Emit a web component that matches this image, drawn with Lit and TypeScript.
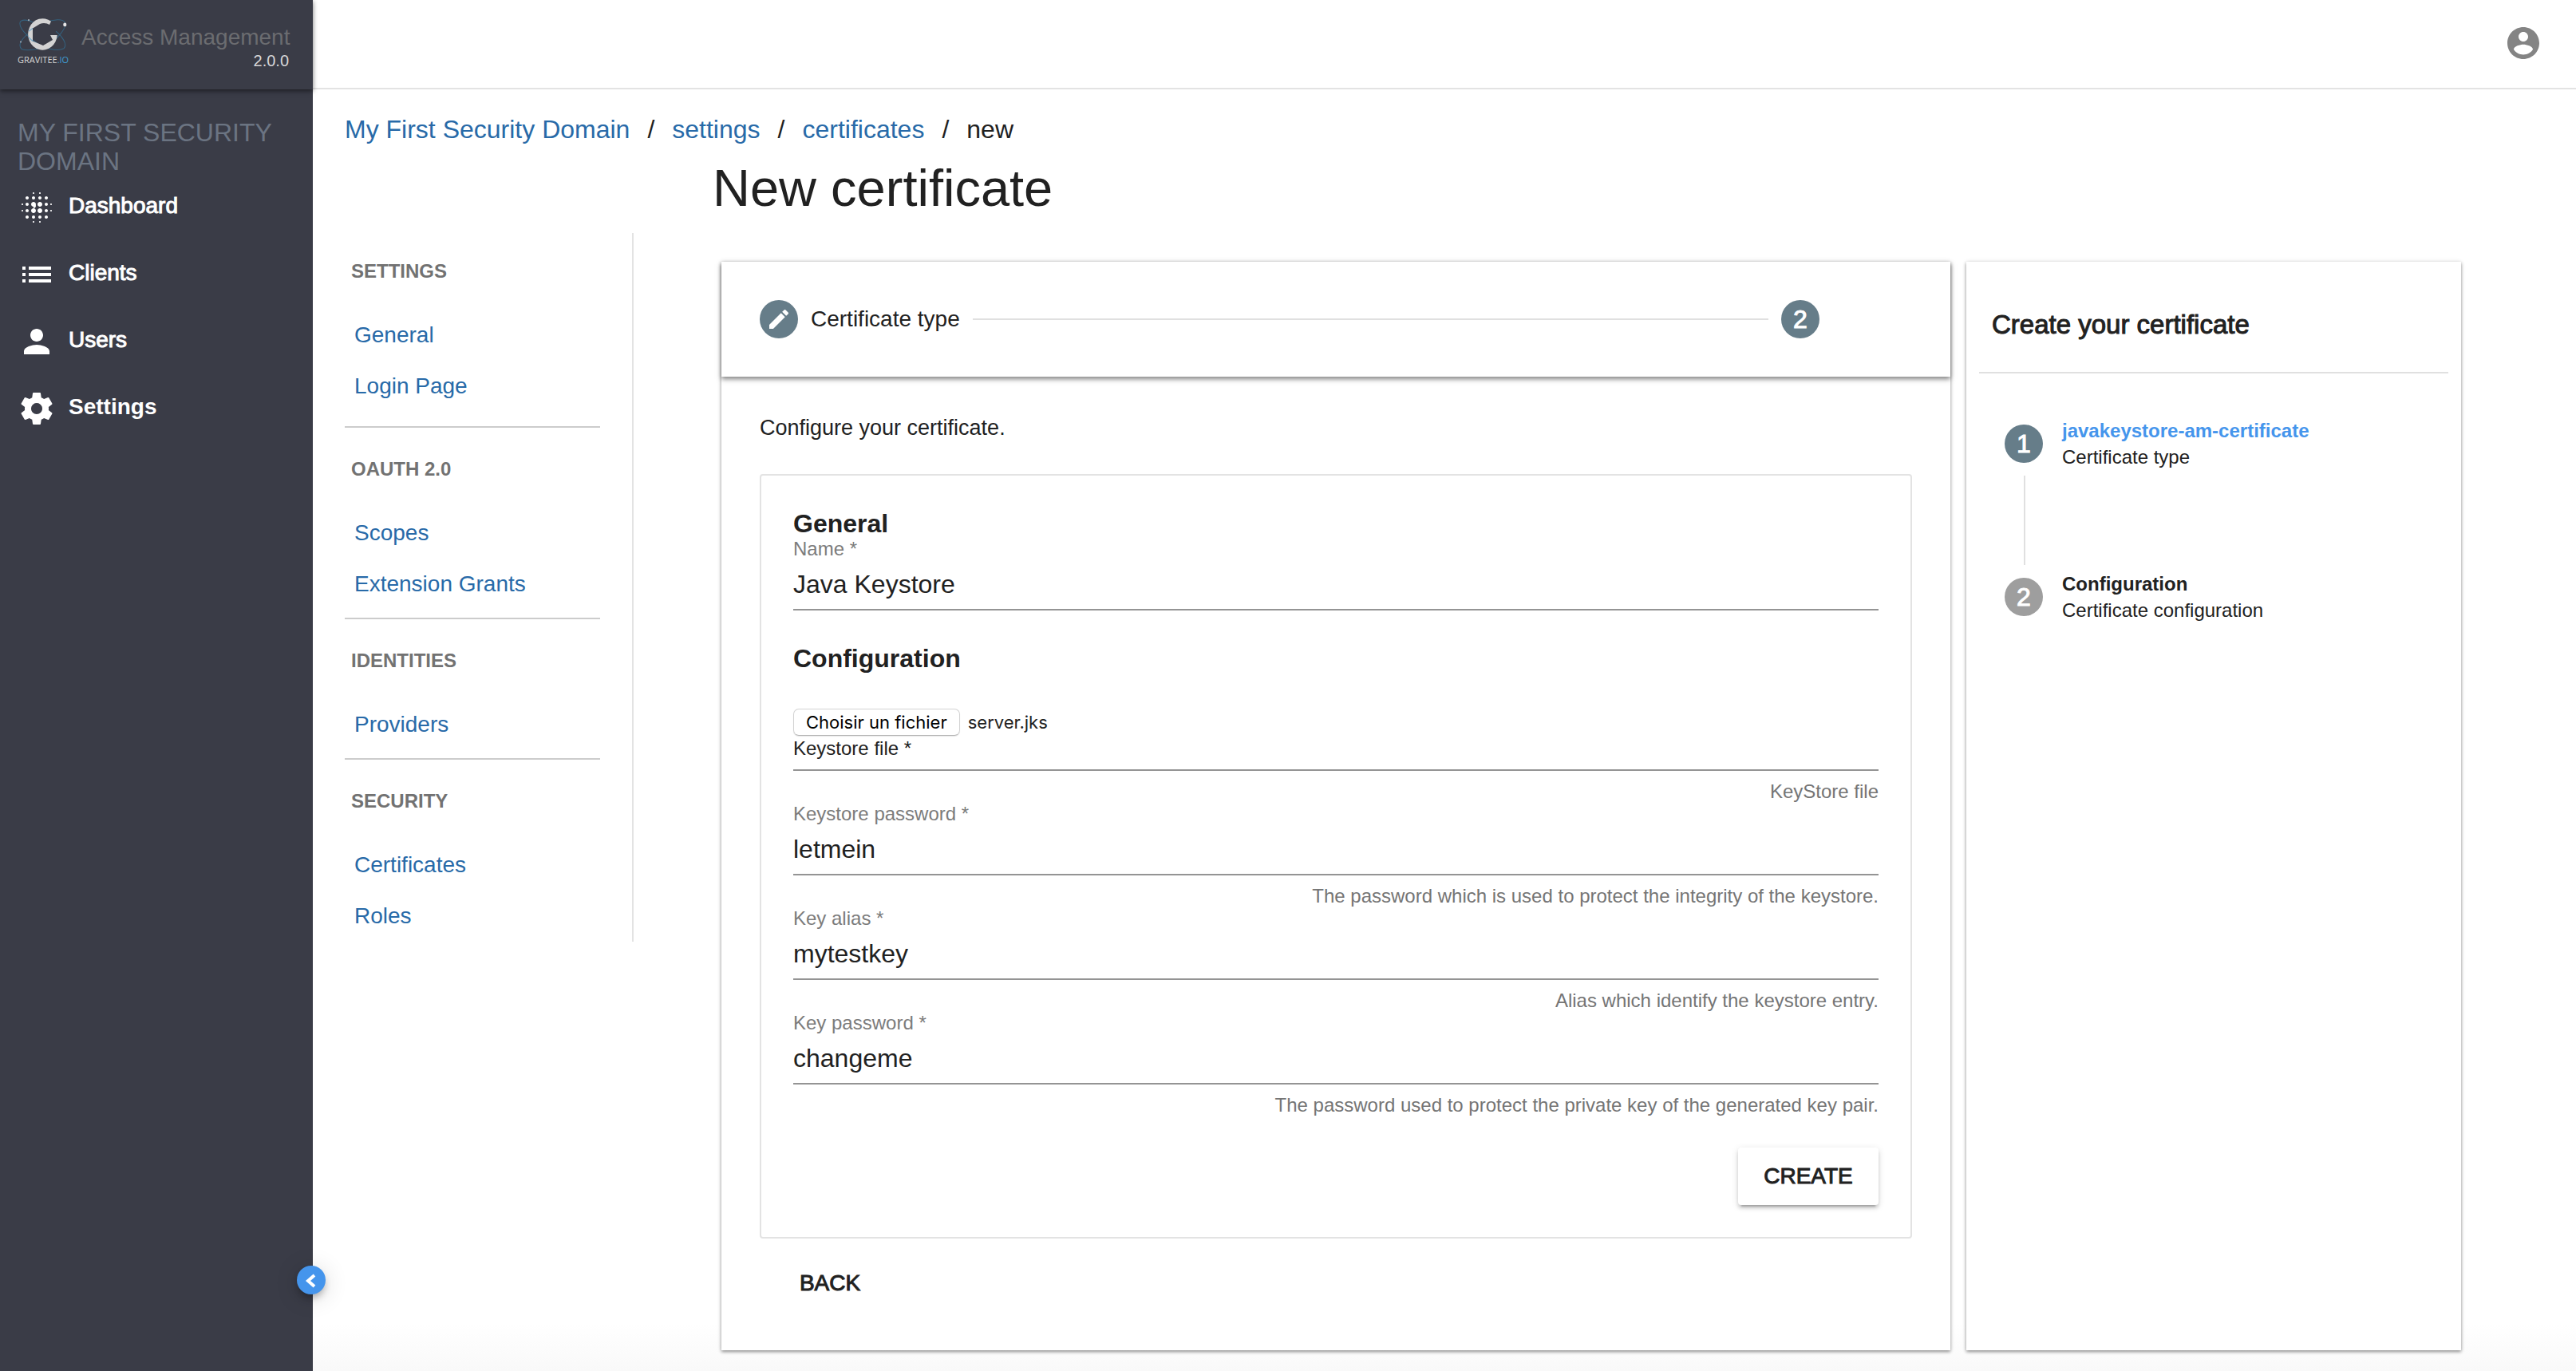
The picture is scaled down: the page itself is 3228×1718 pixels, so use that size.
import { LitElement, html, css, nothing } from "lit";
import { customElement, state } from "lit/decorators.js";
import { classMap } from "lit/directives/class-map.js";

const icons = {
  dashboard: "M6 13c-.55 0-1 .45-1 1s.45 1 1 1 1-.45 1-1-.45-1-1-1zm0 4c-.55 0-1 .45-1 1s.45 1 1 1 1-.45 1-1-.45-1-1-1zm0-8c-.55 0-1 .45-1 1s.45 1 1 1 1-.45 1-1-.45-1-1-1zm-3 .5c-.28 0-.5.22-.5.5s.22.5.5.5.5-.22.5-.5-.22-.5-.5-.5zM6 5c-.55 0-1 .45-1 1s.45 1 1 1 1-.45 1-1-.45-1-1-1zm15 5.5c.28 0 .5-.22.5-.5s-.22-.5-.5-.5-.5.22-.5.5.22.5.5.5zM14 7c.55 0 1-.45 1-1s-.45-1-1-1-1 .45-1 1 .45 1 1 1zm0-3.500c.28 0 .5-.22.5-.5s-.22-.5-.5-.5-.5.22-.5.5.22.5.5.5zm-11 10c-.28 0-.5.22-.5.5s.22.5.5.5.5-.22.5-.5-.22-.5-.5-.5zm7 7c-.28 0-.5.22-.5.5s.22.5.5.5.5-.22.5-.5-.22-.5-.5-.5zm0-17c.28 0 .5-.22.5-.5s-.22-.5-.5-.5-.5.22-.5.5.22.5.5.5zM10 7c.55 0 1-.45 1-1s-.45-1-1-1-1 .45-1 1 .45 1 1 1zm0 5.500c.83 0 1.500-.67 1.500-1.500S10.830 8.500 10 8.500s-1.500.67-1.500 1.500.67 1.500 1.500 1.500zm8 .5c-.55 0-1 .45-1 1s.45 1 1 1 1-.45 1-1-.45-1-1-1zm0 4c-.55 0-1 .45-1 1s.45 1 1 1 1-.45 1-1-.45-1-1-1zm0-8c-.55 0-1 .45-1 1s.45 1 1 1 1-.45 1-1-.45-1-1-1zm0-4c-.55 0-1 .45-1 1s.45 1 1 1 1-.45 1-1-.45-1-1-1zm3 8.500c-.28 0-.5.22-.5.5s.22.5.5.5.5-.22.5-.5-.22-.5-.5-.5zM14 17c-.55 0-1 .45-1 1s.45 1 1 1 1-.45 1-1-.45-1-1-1zm0 3.500c-.28 0-.5.22-.5.5s.22.5.5.5.5-.22.5-.5-.22-.5-.5-.5zm-4-12c-.83 0-1.500.67-1.500 1.500s.67 1.500 1.500 1.500 1.500-.67 1.500-1.500-.67-1.500-1.500-1.500zm0 8.500c-.55 0-1 .45-1 1s.45 1 1 1 1-.45 1-1-.45-1-1-1zm4-4.500c-.83 0-1.500.67-1.500 1.500s.67 1.500 1.500 1.500 1.500-.67 1.500-1.500-.67-1.500-1.500-1.500zm0-4c-.83 0-1.500.67-1.500 1.500s.67 1.500 1.500 1.500 1.500-.67 1.500-1.500-.67-1.500-1.500-1.500zm-4 4c-.83 0-1.500.67-1.500 1.500s.67 1.500 1.500 1.500 1.500-.67 1.500-1.500-.67-1.500-1.500-1.500z",
  list: "M3 13h2v-2H3v2zm0 4h2v-2H3v2zm0-8h2V7H3v2zm4 4h14v-2H7v2zm0 4h14v-2H7v2zM7 7v2h14V7H7z",
  person: "M12 12c2.210 0 4-1.790 4-4s-1.790-4-4-4-4 1.790-4 4 1.790 4 4 4zm0 2c-2.670 0-8 1.340-8 4v2h16v-2c0-2.660-5.330-4-8-4z",
  settings: "M19.430 12.980c.04-.32.07-.64.07-.98s-.03-.66-.07-.98l2.110-1.650c.19-.15.24-.42.12-.64l-2-3.460c-.12-.22-.39-.3-.61-.22l-2.490 1c-.52-.4-1.080-.73-1.690-.98l-.38-2.650C14.460 2.180 14.250 2 14 2h-4c-.25 0-.46.18-.49.42l-.38 2.650c-.61.25-1.170.59-1.690.98l-2.490-1c-.23-.09-.49 0-.61.22l-2 3.460c-.13.22-.07.49.12.64l2.110 1.650c-.04.32-.07.65-.07.98s.03.66.07.98l-2.110 1.650c-.19.15-.24.42-.12.64l2 3.460c.12.22.39.3.61.22l2.490-1c.52.4 1.080.73 1.690.98l.38 2.650c.03.24.24.42.49.42h4c.25 0 .46-.18.49-.42l.38-2.650c.61-.25 1.170-.59 1.690-.98l2.490 1c.23.09.49 0 .61-.22l2-3.460c.12-.22.07-.49-.12-.64l-2.110-1.650zM12 15.500c-1.930 0-3.500-1.570-3.500-3.500s1.570-3.500 3.500-3.500 3.500 1.570 3.500 3.500-1.570 3.500-3.500 3.500z",
  account: "M12 2C6.480 2 2 6.480 2 12s4.480 10 10 10 10-4.480 10-10S17.520 2 12 2zm0 3c1.660 0 3 1.340 3 3s-1.340 3-3 3-3-1.340-3-3 1.340-3 3-3zm0 14.200c-2.500 0-4.710-1.280-6-3.220.03-1.990 4-3.080 6-3.080 1.990 0 5.970 1.090 6 3.080-1.290 1.940-3.500 3.220-6 3.220z",
  edit: "M3 17.250V21h3.750L17.810 9.940l-3.750-3.750L3 17.250zM20.710 7.040c.39-.39.39-1.020 0-1.410l-2.340-2.340c-.39-.39-1.020-.39-1.410 0l-1.830 1.830 3.750 3.750 1.830-1.830z",
};

const icon = (d: string, cls = "icon") =>
  html`<svg class=${cls} viewBox="0 0 24 24" aria-hidden="true"><path d=${d} fill="currentColor"></path></svg>`;

const base = css`
  :host {
    display: block;
    font-family: "Liberation Sans", Arial, Helvetica, sans-serif;
    color: #212121;
  }
  * {
    box-sizing: border-box;
  }
  a {
    text-decoration: none;
    color: #286aa8;
  }
  h1, h2, h3, p, ul, ol {
    margin: 0;
    padding: 0;
    list-style: none;
  }
  button {
    font: inherit;
    color: inherit;
    border: 0;
    background: none;
    cursor: pointer;
  }
`;

@customElement("am-sidebar")
class AmSidebar extends LitElement {
  static styles = [base, css`
    :host {
      position: relative;
      background: #3a3c47;
      color: #fff;
    }
    .brand {
      display: flex;
      height: 112px;
      padding: 23px 24px 0 22px;
      gap: 16px;
      box-shadow: 0 2px 6px rgba(0, 0, 0, 0.55);
    }
    .logo {
      display: flex;
      flex-direction: column;
      width: 64px;
      font: 11px/22px "Open Sans", "Noto Sans", sans-serif;
      color: #d5d5d5;
    }
    .logo .mark {
      width: 64px;
      height: 41px;
    }
    .logo .io {
      color: #3f9bd0;
    }
    .product {
      flex: 1;
      display: flex;
      flex-direction: column;
      padding-top: 4px;
      font-size: 28px;
      line-height: 40px;
      color: #6b6c70;
      white-space: nowrap;
    }
    .version {
      align-self: flex-end;
      padding-right: 6px;
      font-size: 20px;
      line-height: 18px;
      color: #d6d6d8;
    }
    .domain {
      padding: 36px 22px 16px;
      font-size: 32px;
      font-weight: 400;
      line-height: 36px;
      color: #6b7482;
      text-transform: uppercase;
    }
    .menu {
      display: flex;
      flex-direction: column;
      gap: 36px;
      padding: 0 22px;
    }
    .item {
      display: flex;
      align-items: center;
      gap: 16px;
      height: 48px;
      color: #fff;
      font-size: 28px;
      -webkit-text-stroke: 1px currentColor;
    }
    .item.active {
      font-weight: 700;
      -webkit-text-stroke: 0;
    }
    .icon {
      width: 48px;
      height: 48px;
      flex: none;
    }
    .text {
      padding-bottom: 4px;
    }
    .toggle {
      position: absolute;
      right: -16px;
      bottom: 96px;
      width: 36px;
      height: 36px;
      padding: 0;
      border-radius: 50%;
      background: #4595ec;
      box-shadow: 0 6px 10px -2px rgba(0, 0, 0, 0.3), 0 4px 30px rgba(0, 0, 0, 0.16);
    }
    .chevron {
      display: block;
      width: 36px;
      height: 36px;
    }
  `];

  private items = [
    { label: "Dashboard", icon: icons.dashboard },
    { label: "Clients", icon: icons.list },
    { label: "Users", icon: icons.person },
    { label: "Settings", icon: icons.settings, active: true },
  ];

  render() {
    return html`
      <div class="brand">
        <div class="logo">
          <svg class="mark" viewBox="22 22 64 38" preserveAspectRatio="none" aria-hidden="true">
            <g fill="none" stroke="#35627f" stroke-width="1">
              <path d="M57 27C67 23 79 22 81.500 27C84 33 72 45 64 51C53 58 35 60 27.500 58C22 54 26 47 35 40"></path>
              <path d="M42 27C35 23 26 23 25 27C24 33 33 42 42 48C54 57 72 61 80 57C85 52 78 43 70 37"></path>
            </g>
            <path fill="#d3d3d3" d="M64 25.500A18.300 18.300 0 1 0 71.700 41.500L63 41.500L66 47L54 53.500L41 48.500L41 33.500L50 28.500C54 27 59 27.500 62 29.500Z"></path>
            <path d="M36 37L41 33.500M36 44L41 48.500" stroke="#6fa8cc" stroke-width="1"></path>
            <circle cx="81.300" cy="29.300" r="2.100" fill="#e6e6e6"></circle>
            <circle cx="36" cy="24" r="1" fill="#a9b4bd"></circle>
            <circle cx="26" cy="49.300" r="1" fill="#a9b4bd"></circle>
          </svg>
          <span>GRAVITEE<span class="io">.IO</span></span>
        </div>
        <div class="product">
          <span>Access Management</span>
          <span class="version">2.0.0</span>
        </div>
      </div>
      <h2 class="domain">My First Security Domain</h2>
      <nav class="menu" aria-label="Domain">
        ${this.items.map((i) => html`
          <a href="#" class=${classMap({ item: true, active: !!i.active })}>
            ${icon(i.icon)}<span class="text">${i.label}</span>
          </a>`)}
      </nav>
      <button class="toggle" aria-label="Collapse menu">
        <svg class="chevron" viewBox="0 0 36 36" aria-hidden="true">
          <path d="M22 12L14 19L22 26" fill="none" stroke="#fff" stroke-width="4"></path>
        </svg>
      </button>
    `;
  }
}

@customElement("am-settings-nav")
class AmSettingsNav extends LitElement {
  static styles = [base, css`
    :host {
      border-right: 2px solid #e3e3e3;
    }
    .group {
      margin-right: 40px;
      padding: 28px 0 10px;
      border-bottom: 2px solid #ccc;
    }
    .group:first-child {
      padding: 24px 0 18px;
    }
    .group:last-child {
      padding-bottom: 0;
      border-bottom: 0;
    }
    .title {
      padding: 0 8px 24px;
      font-size: 24px;
      line-height: 48px;
      font-weight: 700;
      color: #727272;
      text-transform: uppercase;
    }
    .link {
      display: block;
      padding-left: 12px;
      font-size: 28px;
      line-height: 64px;
    }
  `];

  private groups = [
    { title: "Settings", links: ["General", "Login Page"] },
    { title: "OAuth 2.0", links: ["Scopes", "Extension Grants"] },
    { title: "Identities", links: ["Providers"] },
    { title: "Security", links: ["Certificates", "Roles"] },
  ];

  render() {
    return this.groups.map((g) => html`
      <section class="group">
        <h3 class="title">${g.title}</h3>
        ${g.links.map((l) => html`<a class="link" href="#">${l}</a>`)}
      </section>`);
  }
}

@customElement("am-certificate-form")
class AmCertificateForm extends LitElement {
  static styles = [base, css`
    :host {
      border: 2px solid #e3e3e3;
      border-radius: 4px;
    }
    .form {
      display: flex;
      flex-direction: column;
      padding: 42px 40px 40px;
    }
    .heading {
      font-size: 32px;
      line-height: 36px;
      font-weight: 700;
    }
    .heading.next {
      margin: 42px 0 45px;
    }
    .field {
      display: flex;
      flex-direction: column;
      border-bottom: 2px solid #949494;
    }
    .label {
      font-size: 24px;
      line-height: 28px;
      color: #7c7c7c;
    }
    .label.dark {
      color: #212121;
    }
    .input {
      height: 61px;
      width: 100%;
      padding: 0;
      border: 0;
      outline: 0;
      background: none;
      font: inherit;
      font-size: 32px;
      color: #212121;
    }
    .file {
      display: flex;
      align-items: flex-start;
      gap: 10px;
      height: 36px;
      position: relative;
      font-family: Inter, sans-serif;
      font-size: 22px;
      line-height: 34px;
    }
    .picker {
      height: 34px;
      padding: 0 15px;
      border: 1px solid #d2d2d2;
      border-bottom-color: #b4b4b4;
      border-radius: 7px;
      line-height: 32px;
      color: #000;
      box-shadow: 0 1px 1px rgba(0, 0, 0, 0.1);
    }
    .native {
      position: absolute;
      width: 100%;
      height: 34px;
      opacity: 0;
    }
    .field.upload {
      padding-bottom: 12px;
    }
    .hint {
      padding-top: 12px;
      font-size: 24px;
      line-height: 28px;
      text-align: right;
      color: #757575;
    }
    .create {
      align-self: flex-end;
      min-width: 176px;
      height: 72px;
      margin-top: 39px;
      padding: 0 30px;
      border-radius: 4px;
      background: #fff;
      font-size: 28px;
      -webkit-text-stroke: 1px currentColor;
      box-shadow: 0 6px 2px -4px rgba(0, 0, 0, 0.2), 0 4px 4px rgba(0, 0, 0, 0.14), 0 2px 10px rgba(0, 0, 0, 0.12);
    }
  `];

  @state() private fileName = "server.jks";

  private fields = [
    { id: "store-pass", label: "Keystore password", value: "letmein", hint: "The password which is used to protect the integrity of the keystore." },
    { id: "alias", label: "Key alias", value: "mytestkey", hint: "Alias which identify the keystore entry." },
    { id: "key-pass", label: "Key password", value: "changeme", hint: "The password used to protect the private key of the generated key pair." },
  ];

  private pick(e: Event) {
    const file = (e.target as HTMLInputElement).files?.[0];
    if (file) this.fileName = file.name;
  }

  private field(f: { id: string; label: string; value: string; hint?: string }) {
    return html`
      <div class="field">
        <label class="label" for=${f.id}>${f.label} *</label>
        <input class="input" id=${f.id} type="text" required .value=${f.value} />
      </div>
      ${f.hint ? html`<p class="hint">${f.hint}</p>` : nothing}`;
  }

  render() {
    return html`
      <form class="form" @submit=${(e: Event) => e.preventDefault()}>
        <h3 class="heading">General</h3>
        ${this.field({ id: "name", label: "Name", value: "Java Keystore" })}
        <h3 class="heading next">Configuration</h3>
        <div class="field upload">
          <div class="file">
            <span class="picker">Choisir un fichier</span>
            <span>${this.fileName}</span>
            <input class="native" id="file" type="file" @change=${this.pick} />
          </div>
          <label class="label dark" for="file">Keystore file *</label>
        </div>
        <p class="hint">KeyStore file</p>
        ${this.fields.map((f) => this.field(f))}
        <button class="create" type="submit">CREATE</button>
      </form>`;
  }
}

@customElement("am-summary")
class AmSummary extends LitElement {
  static styles = [base, css`
    .title {
      margin: 0 16px;
      padding: 60px 16px 40px;
      border-bottom: 2px solid #e0e0e0;
      font-size: 33px;
      line-height: 38px;
      font-weight: 400;
      -webkit-text-stroke: 1px currentColor;
    }
    .steps {
      display: flex;
      flex-direction: column;
      padding: 64px 48px;
    }
    .step {
      display: flex;
      align-items: center;
      gap: 24px;
      height: 48px;
      font-size: 24px;
      line-height: 33px;
    }
    .badge {
      width: 48px;
      height: 48px;
      flex: none;
      border-radius: 50%;
      background: #9e9e9e;
      color: #fff;
      font-size: 32px;
      line-height: 49px;
      text-align: center;
      -webkit-text-stroke: 1px currentColor;
    }
    .badge.done {
      background: #667d89;
    }
    .name {
      font-weight: 700;
    }
    .name.done {
      color: #4595ec;
    }
    .connector {
      width: 2px;
      height: 112px;
      margin: 16px 24px;
      background: #e0e0e0;
    }
  `];

  render() {
    return html`
      <h2 class="title">Create your certificate</h2>
      <div class="steps">
        <div class="step">
          <span class="badge done">1</span>
          <div><p class="name done">javakeystore-am-certificate</p><p>Certificate type</p></div>
        </div>
        <div class="connector"></div>
        <div class="step">
          <span class="badge">2</span>
          <div><p class="name">Configuration</p><p>Certificate configuration</p></div>
        </div>
      </div>`;
  }
}

@customElement("app-root")
class AppRoot extends LitElement {
  static styles = [base, css`
    .shell {
      display: grid;
      grid-template-columns: 392px 1fr;
      min-height: 100vh;
      background: linear-gradient(to top, #f9f9f9, #fff 60px);
    }
    .topbar {
      display: flex;
      justify-content: flex-end;
      height: 112px;
      padding: 30px 42px 0;
      border-bottom: 2px solid #e3e3e3;
    }
    .user {
      width: 48px;
      height: 48px;
      padding: 0;
      color: #848484;
    }
    .icon {
      display: block;
      width: 48px;
      height: 48px;
    }
    .page {
      padding: 30px 144px 26px 40px;
    }
    .crumbs {
      display: flex;
      gap: 22px;
      margin-bottom: 18px;
      font-size: 32px;
      line-height: 40px;
    }
    .body {
      display: grid;
      grid-template-columns: 362px 1fr;
      align-items: start;
    }
    .heading {
      grid-column: 2;
      padding: 0 0 20px 99px;
      font-size: 65px;
      line-height: 72px;
      font-weight: 400;
    }
    .columns {
      display: flex;
      gap: 20px;
      padding: 36px 0 0 110px;
    }
    .card {
      flex: 620 1 0;
      background: #fff;
      box-shadow: 0 2px 4px rgba(0, 0, 0, 0.4), 0 0 6px rgba(0, 0, 0, 0.1);
    }
    .card.wide {
      flex-grow: 1540;
    }
    .stepper {
      display: flex;
      align-items: center;
      gap: 16px;
      height: 144px;
      padding: 0 164px 0 48px;
      box-shadow: 0 3px 6px rgba(0, 0, 0, 0.5);
      font-size: 28px;
    }
    .badge {
      display: flex;
      align-items: center;
      justify-content: center;
      width: 48px;
      height: 48px;
      flex: none;
      border-radius: 50%;
      background: #667d89;
      color: #fff;
      font-size: 32px;
      -webkit-text-stroke: 1px currentColor;
    }
    .pen {
      width: 32px;
      height: 32px;
    }
    .rule {
      flex: 1;
      height: 2px;
      background: #e0e0e0;
    }
    .content {
      padding: 48px;
    }
    .intro {
      margin-bottom: 42px;
      font-size: 27px;
      line-height: 32px;
    }
    .back {
      display: block;
      min-width: 176px;
      height: 72px;
      margin-top: 20px;
      padding: 0;
      font-size: 28px;
      -webkit-text-stroke: 1px currentColor;
    }
  `];

  render() {
    return html`
      <div class="shell">
        <am-sidebar></am-sidebar>
        <div>
          <header class="topbar">
            <button class="user" aria-label="Account">${icon(icons.account)}</button>
          </header>
          <main class="page">
            <nav class="crumbs" aria-label="Breadcrumb">
              <a href="#">My First Security Domain</a><span>/</span>
              <a href="#">settings</a><span>/</span>
              <a href="#">certificates</a><span>/</span>
              <span>new</span>
            </nav>
            <div class="body">
              <h1 class="heading">New certificate</h1>
              <am-settings-nav></am-settings-nav>
              <div class="columns">
                <section class="card wide">
                  <div class="stepper">
                    <span class="badge">${icon(icons.edit, "pen")}</span>
                    <span>Certificate type</span>
                    <span class="rule"></span>
                    <span class="badge">2</span>
                  </div>
                  <div class="content">
                    <p class="intro">Configure your certificate.</p>
                    <am-certificate-form></am-certificate-form>
                    <button class="back">BACK</button>
                  </div>
                </section>
                <aside class="card"><am-summary></am-summary></aside>
              </div>
            </div>
          </main>
        </div>
      </div>`;
  }
}
